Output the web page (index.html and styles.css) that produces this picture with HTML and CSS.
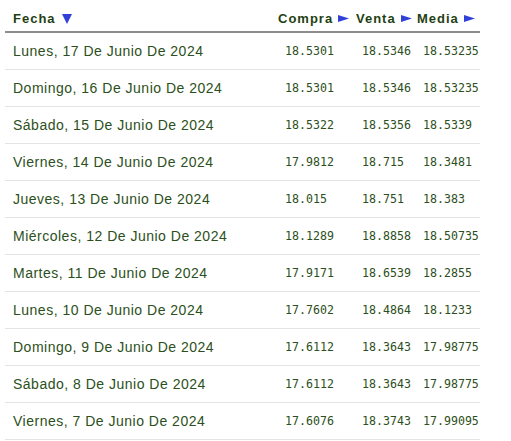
FILE: index.html
```html
<!DOCTYPE html>
<html lang="es">
<head>
<meta charset="utf-8">
<title>Tipo de cambio</title>
<link rel="stylesheet" href="styles.css">
</head>
<body>
<table class="rates">
  <colgroup>
    <col class="c-date"><col class="c-buy"><col class="c-sell"><col class="c-avg">
  </colgroup>
  <thead>
    <tr>
      <th>Fecha<svg class="tri-down" width="10" height="10" viewBox="0 0 10 10"><polygon points="0,0 10,0 5,10"/></svg></th>
      <th>Compra<svg class="tri-right" width="11" height="7" viewBox="0 0 11 7"><polygon points="0,0 11,3.5 0,7"/></svg></th>
      <th>Venta<svg class="tri-right" width="11" height="7" viewBox="0 0 11 7"><polygon points="0,0 11,3.5 0,7"/></svg></th>
      <th class="h-avg">Media<svg class="tri-right" width="11" height="7" viewBox="0 0 11 7"><polygon points="0,0 11,3.5 0,7"/></svg></th>
    </tr>
  </thead>
  <tbody>
    <tr><td class="d">Lunes, 17 De Junio De 2024</td><td class="n buy">18.5301</td><td class="n">18.5346</td><td class="n avg">18.53235</td></tr>
    <tr><td class="d">Domingo, 16 De Junio De 2024</td><td class="n buy">18.5301</td><td class="n">18.5346</td><td class="n avg">18.53235</td></tr>
    <tr><td class="d">Sábado, 15 De Junio De 2024</td><td class="n buy">18.5322</td><td class="n">18.5356</td><td class="n avg">18.5339</td></tr>
    <tr><td class="d">Viernes, 14 De Junio De 2024</td><td class="n buy">17.9812</td><td class="n">18.715</td><td class="n avg">18.3481</td></tr>
    <tr><td class="d">Jueves, 13 De Junio De 2024</td><td class="n buy">18.015</td><td class="n">18.751</td><td class="n avg">18.383</td></tr>
    <tr><td class="d">Miércoles, 12 De Junio De 2024</td><td class="n buy">18.1289</td><td class="n">18.8858</td><td class="n avg">18.50735</td></tr>
    <tr><td class="d">Martes, 11 De Junio De 2024</td><td class="n buy">17.9171</td><td class="n">18.6539</td><td class="n avg">18.2855</td></tr>
    <tr><td class="d">Lunes, 10 De Junio De 2024</td><td class="n buy">17.7602</td><td class="n">18.4864</td><td class="n avg">18.1233</td></tr>
    <tr><td class="d">Domingo, 9 De Junio De 2024</td><td class="n buy">17.6112</td><td class="n">18.3643</td><td class="n avg">17.98775</td></tr>
    <tr><td class="d">Sábado, 8 De Junio De 2024</td><td class="n buy">17.6112</td><td class="n">18.3643</td><td class="n avg">17.98775</td></tr>
    <tr><td class="d">Viernes, 7 De Junio De 2024</td><td class="n buy">17.6076</td><td class="n">18.3743</td><td class="n avg">17.99095</td></tr>
  </tbody>
</table>
</body>
</html>
```

FILE: styles.css
```css
html, body {
  margin: 0;
  padding: 0;
  background: #ffffff;
}

body {
  padding-left: 5px;
  font-family: "Liberation Sans", Arial, sans-serif;
  color: #2c4f20;
}

.rates {
  border-collapse: collapse;
  table-layout: fixed;
  width: 475px;
}

.c-date { width: 265px; }
.c-buy { width: 78px; }
.c-sell { width: 62px; }
.c-avg { width: 70px; }

.rates th {
  height: 15px;
  padding: 11px 0 5px 8px;
  text-align: left;
  vertical-align: bottom;
  font-size: 13px;
  line-height: 15px;
  font-weight: bold;
  letter-spacing: 1px;
  color: #1f3f13;
  white-space: nowrap;
  border-bottom: 2px solid #8d8d8d;
}

.rates th.h-avg { padding-left: 7px; }

.rates th svg {
  fill: #3040d8;
  vertical-align: baseline;
}

.tri-down {
  margin-left: 6px;
  position: relative;
  top: 1px;
}

.tri-right {
  margin-left: 5px;
  position: relative;
  top: -1px;
}

.rates td {
  height: 16px;
  padding: 10px 0 10px 8px;
  line-height: 16px;
  vertical-align: middle;
  white-space: nowrap;
  border-bottom: 1px solid #e4e4e4;
}

.rates td.d {
  font-size: 14px;
  letter-spacing: 0.5px;
}

.rates td.n {
  font-family: "DejaVu Sans Mono", "Liberation Mono", monospace;
  font-size: 11.6px;
  padding-left: 14px;
  color: #2c4f20;
}

.rates td.buy { padding-left: 15px; }
.rates td.avg { padding-left: 13px; }
```
